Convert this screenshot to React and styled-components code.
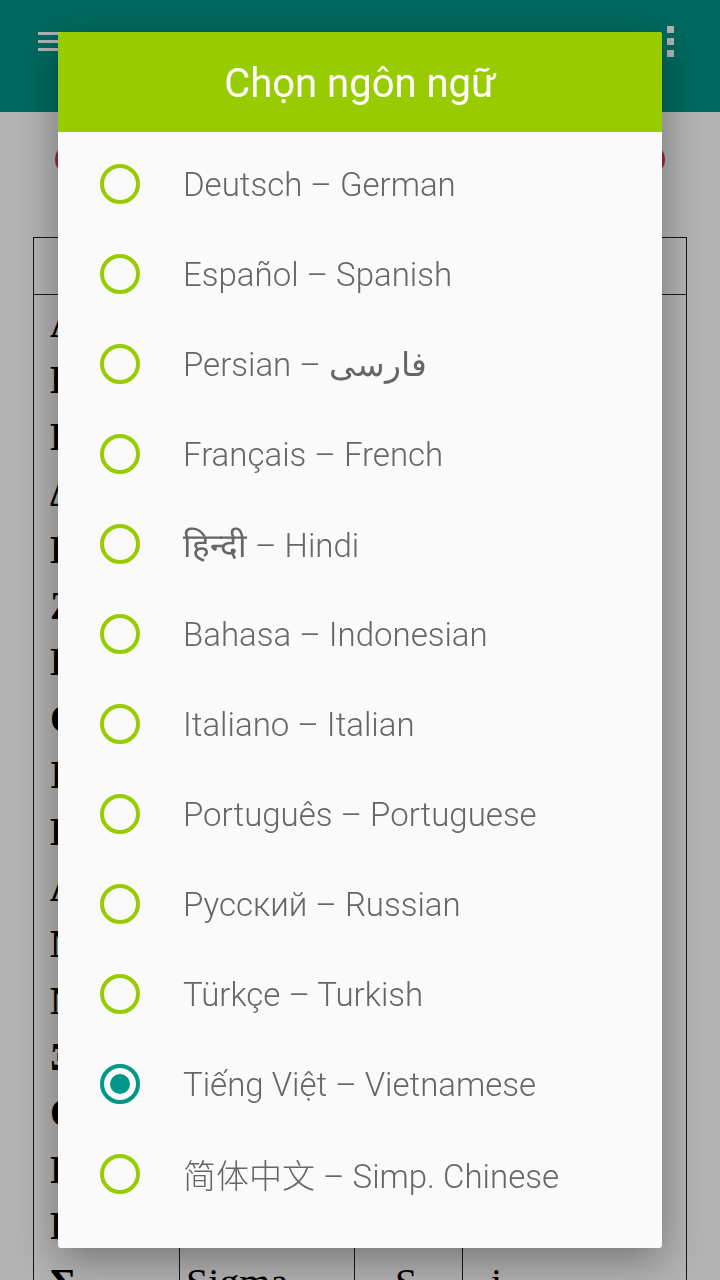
import React from 'react'
import styled, { createGlobalStyle } from 'styled-components'

const GlobalStyle = createGlobalStyle`
  html, body {
    margin: 0;
    padding: 0;
    background: #ffffff;
  }
`

const Page = styled.div`
  position: relative;
  width: 720px;
  height: 1280px;
  overflow: hidden;
  background: #ffffff;
`

const AppBar = styled.div`
  height: 112px;
  background: #009688;
  display: flex;
  align-items: center;
  justify-content: space-between;
  padding: 0 45px 0 38px;
  box-sizing: border-box;
`

const BarIcon = styled.svg`
  display: block;
  margin-top: -30px;
`

const Content = styled.div`
  padding: 31px 0 0;
`

const RedBar = styled.div`
  height: 33px;
  margin: 0 55px;
  border-radius: 17px;
  background: #de3a4f;
`

const Table = styled.div`
  margin: 61px 0 0 33px;
  width: 654px;
  border: 1px solid #222;
  border-bottom: 0;
  box-sizing: border-box;
`

const Row = styled.div`
  display: grid;
  grid-template-columns: 145px 175px 108px 1fr;
  height: ${props => props.height || 56.4}px;
  border-bottom: ${props => props.head ? '1px solid #222' : '0'};
`

const Cell = styled.div`
  border-left: ${props => props.first ? '0' : '1px solid #222'};
  padding-left: ${props => props.pad || 6}px;
  font-family: "Liberation Serif", "DejaVu Serif", serif;
  font-size: 40px;
  font-weight: ${props => props.bold ? 'bold' : 'normal'};
  line-height: 58px;
  color: #000;
  white-space: nowrap;
  overflow: hidden;
`

const Scrim = styled.div`
  position: fixed;
  inset: 0;
  background: rgba(0, 0, 0, 0.3);
  display: flex;
  align-items: center;
  justify-content: center;
`

const Dialog = styled.div`
  width: 604px;
  height: 1216px;
  background: #fafafa;
  border-radius: 3px;
  overflow: hidden;
  box-shadow: 0 12px 40px rgba(0, 0, 0, 0.35);
  display: flex;
  flex-direction: column;
`

const DialogHeader = styled.div`
  height: 100px;
  background: #99cc00;
  display: flex;
  align-items: center;
  justify-content: center;
  flex-shrink: 0;
`

const DialogTitle = styled.h1`
  margin: 2px 0 0;
  color: #ffffff;
  font-family: "Roboto", "Noto Sans", sans-serif;
  font-weight: 400;
  font-size: 40px;
`

const List = styled.div`
  padding-top: 7px;
  display: flex;
  flex-direction: column;
`

const Item = styled.div`
  height: 90px;
  display: flex;
  align-items: center;
  padding-left: 42px;
`

const Radio = styled.span`
  width: 40px;
  height: 40px;
  box-sizing: border-box;
  border-radius: 50%;
  border: 4px solid ${props => props.checked ? '#009688' : '#99cc00'};
  display: flex;
  align-items: center;
  justify-content: center;
  flex-shrink: 0;

  &::after {
    content: '';
    display: ${props => props.checked ? 'block' : 'none'};
    width: 20px;
    height: 20px;
    border-radius: 50%;
    background: #009688;
  }
`

const Label = styled.span`
  margin-left: 43px;
  color: #666666;
  font-family: "Roboto", "DejaVu Sans", "Noto Sans CJK SC", sans-serif;
  font-weight: 300;
  font-size: 33px;
  white-space: nowrap;
`

const greek = [
  ['Α', 'Alpha', 'A', 'a'],
  ['Β', 'Beta', 'B', 'v'],
  ['Γ', 'Gamma', 'G', 'gh'],
  ['Δ', 'Delta', 'D', 'dh'],
  ['Ε', 'Epsilon', 'E', 'e'],
  ['Ζ', 'Zeta', 'Z', 'z'],
  ['Η', 'Eta', 'Ē', 'i'],
  ['Θ', 'Theta', 'Th', 'th'],
  ['Ι', 'Iota', 'I', 'i'],
  ['Κ', 'Kappa', 'K', 'k'],
  ['Λ', 'Lambda', 'L', 'l'],
  ['Μ', 'Mu', 'M', 'm'],
  ['Ν', 'Nu', 'N', 'n'],
  ['Ξ', 'Xi', 'X', 'ks'],
  ['Ο', 'Omicron', 'O', 'o'],
  ['Π', 'Pi', 'P', 'p'],
  ['Ρ', 'Rho', 'R', 'r'],
  ['Σ', 'Sigma', 'S', 'i']
]

const languages = [
  'Deutsch – German',
  'Español – Spanish',
  'Persian – فارسی',
  'Français – French',
  'हिन्दी – Hindi',
  'Bahasa – Indonesian',
  'Italiano – Italian',
  'Português – Portuguese',
  'Русский – Russian',
  'Türkçe – Turkish',
  'Tiếng Việt – Vietnamese',
  '简体中文 – Simp. Chinese'
]

const MenuIcon = () => (
  <BarIcon width="26" height="24" viewBox="0 0 26 24">
    <rect x="0" y="3" width="26" height="3" fill="#fff" />
    <rect x="0" y="11" width="26" height="3" fill="#fff" />
    <rect x="0" y="19" width="26" height="3" fill="#fff" />
  </BarIcon>
)

const MoreIcon = () => (
  <BarIcon width="8" height="32" viewBox="0 0 8 32">
    <rect x="0" y="1" width="7" height="7" fill="#fff" />
    <rect x="0" y="13" width="7" height="7" fill="#fff" />
    <rect x="0" y="25" width="7" height="7" fill="#fff" />
  </BarIcon>
)

export default function App () {
  const selected = 10
  return (
    <Page>
      <GlobalStyle />
      <AppBar>
        <MenuIcon />
        <MoreIcon />
      </AppBar>
      <Content>
        <RedBar />
        <Table>
          <Row head height={56}>
            <Cell first />
            <Cell />
            <Cell />
            <Cell />
          </Row>
          {greek.map(row => (
            <Row key={row[1]}>
              <Cell first bold pad={16}>{row[0]}</Cell>
              <Cell>{row[1]}</Cell>
              <Cell pad={40}>{row[2]}</Cell>
              <Cell pad={28}>{row[3]}</Cell>
            </Row>
          ))}
        </Table>
      </Content>
      <Scrim>
        <Dialog>
          <DialogHeader>
            <DialogTitle>Chọn ngôn ngữ</DialogTitle>
          </DialogHeader>
          <List>
            {languages.map((lang, i) => (
              <Item key={lang}>
                <Radio checked={i === selected} />
                <Label>{lang}</Label>
              </Item>
            ))}
          </List>
        </Dialog>
      </Scrim>
    </Page>
  )
}
